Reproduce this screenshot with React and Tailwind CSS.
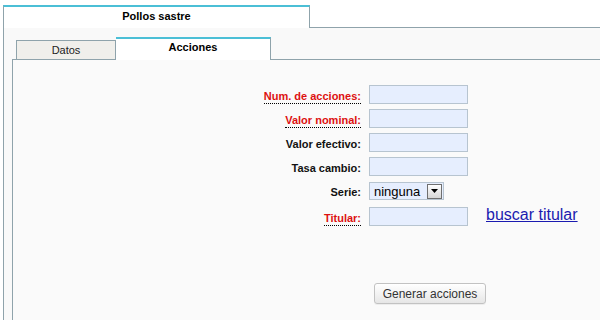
import React from 'react';

const fields = [
  { label: 'Num. de acciones:', required: true, gap: 'mt-0' },
  { label: 'Valor nominal:', required: true, gap: 'mt-[5px]' },
  { label: 'Valor efectivo:', required: false, gap: 'mt-[5px]' },
  { label: 'Tasa cambio:', required: false, gap: 'mt-[5px]' },
];

function Label({ text, required }) {
  return (
    <div className="w-[348px] flex justify-end items-end">
      <span
        className={`inline-block leading-[13px] text-[11px] font-bold border-b border-dotted ${
          required ? 'text-[#dd1111] border-[#000]' : 'text-[#111] border-transparent'
        }`}
      >
        {text}
      </span>
    </div>
  );
}

function TextInput() {
  return <div className="w-[99px] h-[19px] border border-[#b7c4d0] bg-[#e6eefe]" />;
}

export default function App() {
  return (
    <div className="w-[600px] h-[320px] bg-white overflow-hidden flex flex-col font-['Liberation_Sans',Arial,sans-serif]">
      {/* outer tab strip */}
      <div className="flex items-end h-[28px] pl-[3px] shrink-0">
        <div className="w-[307px] h-[23px] bg-white border-t-2 border-t-[#4bbfd6] border-x border-x-[#8fa3ab] text-center text-[11px] font-bold text-black leading-[13px] pt-[3px]">
          Pollos sastre
        </div>
        <div className="flex-1 border-b border-[#8fa3ab]" />
      </div>

      {/* outer panel */}
      <div className="flex-1 ml-[3px] border-l border-[#8fa3ab] bg-[#f9f9f9] pl-[8px] pt-[9px] flex flex-col">
        {/* inner tabs */}
        <div className="flex items-end h-[23px] shrink-0">
          <div className="w-[4px] border-b border-[#8fa3ab]" />
          <div className="w-[100px] h-[20px] bg-[#f0efeb] border border-[#8fa3ab] text-center text-[11px] text-[#222] leading-[13px] pt-[3px]">
            Datos
          </div>
          <div className="w-[155px] h-[23px] bg-white border-t-2 border-t-[#4bbfd6] border-r border-r-[#8fa3ab] text-center text-[11px] font-bold text-black leading-[13px] pt-[2px]">
            Acciones
          </div>
          <div className="flex-1 border-b border-[#8fa3ab]" />
        </div>

        {/* inner panel */}
        <div className="flex-1 border-l border-[#8fa3ab] bg-[#fafafa] pt-[25px] flex flex-col">
          {fields.map((f) => (
            <div key={f.label} className={`flex gap-[8px] h-[19px] ${f.gap}`}>
              <Label text={f.label} required={f.required} />
              <TextInput />
            </div>
          ))}

          <div className="flex gap-[8px] h-[18px] mt-[6px]">
            <Label text="Serie:" required={false} />
            <div className="w-[75px] h-[18px] border border-[#b7c4d0] bg-[#e6eefe] flex items-center justify-between pl-[4px] pr-[1px]">
              <span className="text-[13px] text-black leading-[15px]">ninguna</span>
              <div className="w-[15px] h-[15px] border border-[#6f6f6f] bg-gradient-to-b from-white to-[#d6d6d6] flex items-center justify-center">
                <svg width="7" height="4" viewBox="0 0 7 4">
                  <path d="M0 0h7L3.5 4z" fill="#000" />
                </svg>
              </div>
            </div>
          </div>

          <div className="flex h-[19px] mt-[7px]">
            <Label text="Titular:" required={true} />
            <div className="ml-[8px]">
              <TextInput />
            </div>
            <a
              href="#"
              className="ml-[18px] self-start text-[16px] leading-[16px] text-[#1a1ab0] underline"
            >
              buscar titular
            </a>
          </div>

          <div className="flex mt-[57px]">
            <div className="w-[361px]" />
            <button className="h-[21px] w-[112px] rounded-[3px] border border-[#c2c2c2] bg-gradient-to-b from-white to-[#e6e6e6] text-[12px] text-[#333] leading-[14px] shadow-[0_1px_0_rgba(0,0,0,0.05)]">
              Generar acciones
            </button>
          </div>
        </div>
      </div>
    </div>
  );
}
